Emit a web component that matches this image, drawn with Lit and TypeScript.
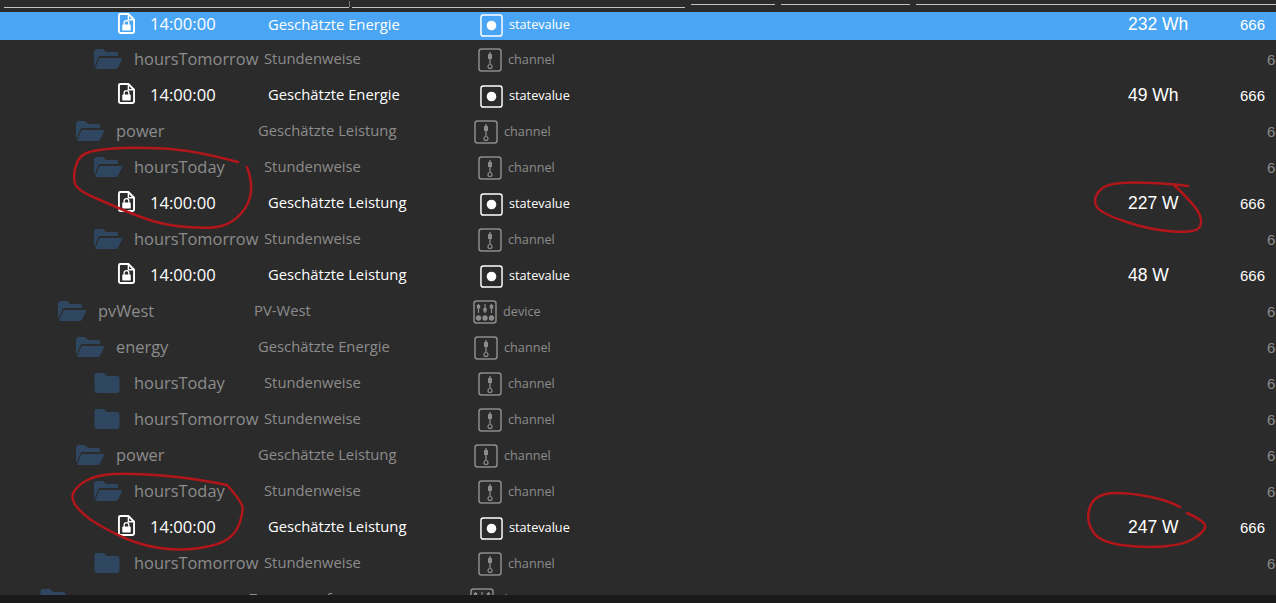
import { LitElement, html, css, svg } from "lit";
import { customElement } from "lit/decorators.js";

type Kind = "channel" | "device" | "state";
interface Row { level: number; open?: boolean; file?: boolean; name: string; desc: string; kind: Kind; value?: string; sel?: boolean; }

const E = "Geschätzte Energie", L = "Geschätzte Leistung", S = "Stundenweise";
const st = (desc: string, value: string, sel = false): Row => ({ level: 3, file: true, name: "14:00:00", desc, kind: "state", value, sel });
const rows: Row[] = [
  st(E, "232 Wh", true),
  { level: 3, open: true, name: "hoursTomorrow", desc: S, kind: "channel" },
  st(E, "49 Wh"),
  { level: 2, open: true, name: "power", desc: L, kind: "channel" },
  { level: 3, open: true, name: "hoursToday", desc: S, kind: "channel" },
  st(L, "227 W"),
  { level: 3, open: true, name: "hoursTomorrow", desc: S, kind: "channel" },
  st(L, "48 W"),
  { level: 1, open: true, name: "pvWest", desc: "PV-West", kind: "device" },
  { level: 2, open: true, name: "energy", desc: E, kind: "channel" },
  { level: 3, name: "hoursToday", desc: S, kind: "channel" },
  { level: 3, name: "hoursTomorrow", desc: S, kind: "channel" },
  { level: 2, open: true, name: "power", desc: L, kind: "channel" },
  { level: 3, open: true, name: "hoursToday", desc: S, kind: "channel" },
  st(L, "247 W"),
  { level: 3, name: "hoursTomorrow", desc: S, kind: "channel" },
  { level: 0, name: "", desc: "Zusammenfassung", kind: "device" },
];

const folderOpen = html`<svg class="folder" viewBox="0 0 28 20"><path fill="#2f4660" d="M0 3a3 3 0 0 1 3-3h6l3 3h10a2 2 0 0 1 2 2v2H7a3 3 0 0 0-3 2L1 17H0Z"/><path fill="#2f4660" d="M7 9h20a1 1 0 0 1 1 1.400L24 18.500a2.500 2.500 0 0 1-2 1.500H2.500a1 1 0 0 1-1-1.400L5 10a2 2 0 0 1 2-1Z"/></svg>`;
const folderClosed = html`<svg class="folder" viewBox="0 0 28 20"><path fill="#2f4660" d="M3 0h7l3 3h10a2.500 2.500 0 0 1 2.500 2.500v12A2.500 2.500 0 0 1 23 20H3a2.500 2.500 0 0 1-2.500-2.500v-15A2.500 2.500 0 0 1 3 0Z"/></svg>`;
const fileLock = html`<svg class="file" viewBox="0 0 18 22"><path fill="none" stroke="currentColor" stroke-width="2" d="M2.500 1h8.500L17 7V19.500a1.500 1.500 0 0 1-1.500 1.500h-13A1.500 1.500 0 0 1 1 19.500v-17A1.500 1.500 0 0 1 2.500 1Z"/><path fill="none" stroke="currentColor" stroke-width="1.500" d="M11 1v6h6"/><rect x="4.500" y="12" width="9" height="6.500" rx="1" fill="currentColor"/><path fill="none" stroke="currentColor" stroke-width="1.400" d="M6.500 12.500V10.500a2.500 2.500 0 0 1 5 0v2"/></svg>`;

const stateIcon = html`<svg class="ki" viewBox="0 0 24 24"><rect x="1" y="1" width="22" height="22" rx="2.500" fill="none" stroke="currentColor" stroke-width="1.500"/><circle cx="12" cy="12" r="5" fill="currentColor"/></svg>`;
const channelIcon = html`<svg class="ki" viewBox="0 0 24 24"><rect x="1" y="1" width="22" height="22" rx="2.500" fill="none" stroke="currentColor" stroke-width="1.500"/><path d="M12 4v12" stroke="currentColor" stroke-width="1.300"/><rect x="10" y="6" width="4" height="5" fill="currentColor"/><circle cx="12" cy="18.500" r="2" fill="none" stroke="currentColor" stroke-width="1.200"/></svg>`;
const slider = (x: number, y: number) => svg`<path d="M${x} 4v9" stroke="currentColor" stroke-width="1.200"/><rect x="${x - 1.7}" y="${y}" width="3.400" height="3.500" fill="currentColor"/><circle cx="${x}" cy="18" r="2.700" fill="currentColor"/>`;
const deviceIcon = html`<svg class="ki" viewBox="0 0 24 24"><rect x="1" y="1" width="22" height="22" rx="2.500" fill="none" stroke="currentColor" stroke-width="1.500"/>${slider(5.5, 5)}${slider(12, 8)}${slider(18.5, 5)}</svg>`;

// Hand-drawn annotation rings: smooth curve through sampled points.
const smooth = (p: number[][]) => {
  let d = `M${p[0][0]} ${p[0][1]}`;
  for (let i = 1; i < p.length - 1; i++) {
    const last = i === p.length - 2;
    const mx = last ? p[i + 1][0] : (p[i][0] + p[i + 1][0]) / 2;
    const my = last ? p[i + 1][1] : (p[i][1] + p[i + 1][1]) / 2;
    d += `Q${p[i][0]} ${p[i][1]} ${mx} ${my}`;
  }
  return d;
};
const rings = [
  smooth([[238, 162], [193, 150], [133, 147], [93, 150], [78, 157], [73, 177], [77, 190], [107, 203], [130, 213], [163, 225], [210, 229], [233, 223], [250, 203], [252, 180], [247, 167]]),
  smooth([[1188, 186], [1173, 184], [1130, 182], [1103, 185], [1093, 200], [1100, 213], [1150, 230], [1197, 233], [1203, 220], [1193, 203], [1173, 184]]),
  smooth([[227, 485], [193, 478], [130, 473], [97, 475], [78, 485], [70, 498], [83, 515], [107, 530], [140, 545], [180, 551], [220, 545], [237, 532], [243, 512], [242, 502], [227, 485]]),
  smooth([[1180, 507], [1167, 500], [1130, 493], [1103, 493], [1090, 503], [1087, 523], [1100, 542], [1143, 548], [1183, 545], [1203, 533], [1207, 522], [1187, 513]]),
];

const LEVELS = [
  { start: 40, nameW: 164 },
  { start: 58, nameW: 151 },
  { start: 76, nameW: 137 },
  { start: 94, nameW: 125 },
];

@customElement("app-root")
export class AppRoot extends LitElement {
  static styles = css`
    :host { display: block; width: 1276px; height: 603px; overflow: hidden; position: relative; background: #2b2b2b; font-family: "Open Sans", "Noto Sans", sans-serif; }
    .page { display: flex; flex-direction: column; height: 603px; }
    .head { height: 12px; display: flex; flex: none; align-items: flex-start; }
    .head i { display: block; height: 1px; background: #c2c2c2; }
    .head .low { margin-top: 7px; }
    .head .high { margin-top: 4px; }
    .head .tick { width: 1px; height: 6px; margin-top: 1px; background: #777; }
    .tree { flex: 1; min-height: 0; overflow: hidden; }
    .row { height: 36px; display: grid; grid-template-columns: 459px 669px 100px 48px; align-items: center; color: #8c8c8c; white-space: nowrap; overflow: hidden; }
    .row.on { color: #fff; }
    .row.sel { background: #4aa6f4; }
    .row.first { height: 28px; padding-bottom: 10px; margin-bottom: 1px; box-sizing: border-box; }
    .nameCell { display: flex; align-items: center; min-width: 0; height: 100%; padding-bottom: 2px; box-sizing: border-box; }
    .tn { display: flex; align-items: center; flex: none; }
    .name { font-size: 16.4px; overflow: hidden; display: block; }
    .desc { font-size: 14.8px; margin-left: 5px; }
    .on .desc { margin-left: 0; }
    .folder { width: 28px; height: 20px; flex: none; margin: 2px 12px 0 0; }
    .file { width: 17px; height: 21px; flex: none; margin: 0 15px 1px 0; color: #fff; }
    .on .name { width: 118px; font-size: 16.6px; }
    .ki { width: 24px; height: 24px; flex: none; margin-top: 2px; }
    .kind { display: flex; align-items: center; gap: 6px; font-size: 12.7px; }
    .on .kind span { margin-bottom: 1px; }
    .on .ki { width: 23px; height: 23px; }
    .value { font-family: "Liberation Sans", Arial, sans-serif; font-size: 17.5px; }
    .num { font-family: "Liberation Sans", Arial, sans-serif; font-size: 15px; }
    .foot { height: 8px; flex: none; background: #1a1a1a; position: absolute; left: 0; right: 0; bottom: 0; }
    .ink { position: absolute; inset: 0; pointer-events: none; }
    .ink path { fill: none; stroke: #b0161a; stroke-width: 2.500; stroke-linecap: round; stroke-linejoin: round; }
  `;

  private renderRow(r: Row, i: number) {
    const lv = LEVELS[r.level];
    const ic = r.kind === "state" ? stateIcon : r.kind === "device" ? deviceIcon : channelIcon;
    const kindLeft = r.kind === "state" ? 21 : r.kind === "device" ? (r.level === 0 ? 11 : 14) : r.level === 2 ? 15 : 19;
    return html`<div class="row ${r.file ? "on" : ""} ${r.sel ? "sel" : ""} ${i === 0 ? "first" : ""}">
      <div class="nameCell" style="padding-left:${r.file ? 118 : lv.start}px">
        ${r.file
          ? html`<div class="tn">${fileLock}<span class="name">${r.name}</span></div>`
          : html`<div class="tn">${r.open ? folderOpen : folderClosed}<span class="name" style="width:${lv.nameW}px">${r.name}</span></div>`}
        <span class="desc">${r.desc}</span>
      </div>
      <div class="kind" style="margin-left:${kindLeft}px">
        ${ic}<span>${r.kind === "state" ? "statevalue" : r.kind}</span>
      </div>
      <div class="value">${r.value ?? ""}</div>
      <div class="num" style="padding-left:${r.file ? 12 : 39}px">666</div>
    </div>`;
  }

  render() {
    return html`<div class="page">
      <div class="head">
        <i class="low" style="margin-left:4px;width:345px"></i><i class="tick"></i><i class="low" style="margin-left:2px;width:333px"></i><i class="high" style="margin-left:6px;width:84px"></i><i class="high" style="margin-left:6px;width:129px"></i><i class="high" style="margin-left:6px;width:360px"></i>
      </div>
      <div class="tree">${rows.map((r, i) => this.renderRow(r, i))}</div>
      <div class="foot"></div>
      <svg class="ink" viewBox="0 0 1276 603">${rings.map((d) => svg`<path d="${d}"/>`)}</svg>
    </div>`;
  }
}
